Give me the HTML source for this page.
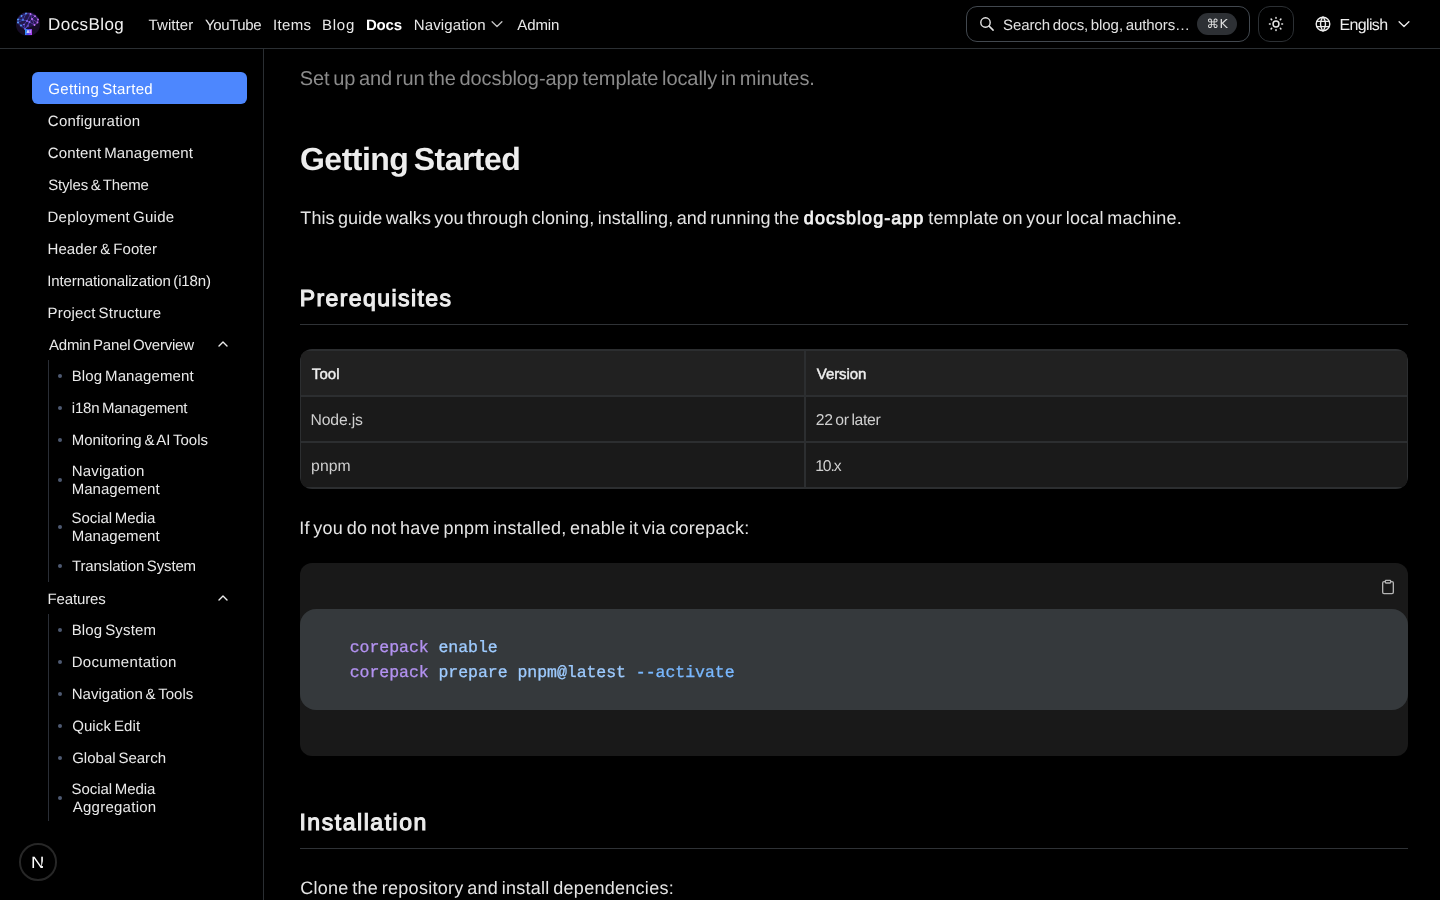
<!DOCTYPE html>
<html lang="en">
<head>
<meta charset="utf-8">
<title>Getting Started – DocsBlog</title>
<style>
*{box-sizing:border-box;margin:0;padding:0}
html,body{width:1440px;height:900px;overflow:hidden;background:#000;color:#e5e5e5;font-family:"Liberation Sans",sans-serif}
#root{position:absolute;left:0;top:0;width:1440px;height:900px;will-change:transform}
.abs{position:absolute}
.t{position:absolute;white-space:nowrap;word-spacing:-0.09em;text-rendering:geometricPrecision}
#hdr-line{left:0;top:48px;width:1440px;height:1px;background:#2b2f33}
#sb-line{left:263px;top:49px;width:1px;height:851px;background:#2a2e32}
#active{left:32px;top:72px;width:215px;height:32px;border-radius:6px;background:#4d87fe}
#searchbox{left:966px;top:6px;width:284px;height:36px;border:1px solid #42484f;border-radius:11px}
#kbdpill{left:1197px;top:13px;width:40px;height:22px;border-radius:11px;background:#2d3034}
#themebtn{left:1258px;top:6px;width:36px;height:36px;border:1px solid #2c3034;border-radius:12px}
.vline{width:1px;background:#2a2e36}
.dot{width:4px;height:4px;border-radius:50%;background:#4e5a72}
.hr{height:1px;background:#2f3236;left:300px;width:1108px}
#tbl{left:300px;top:349px;width:1108px;height:140px;border-radius:12px;background:#2c2e30;overflow:hidden}
#tbl div{position:absolute}
#codeouter{left:300px;top:563px;width:1108px;height:193px;border-radius:12px;background:#191919}
#codeinner{left:300px;top:609px;width:1108px;height:101px;border-radius:16px;background:#35393c}
svg{position:absolute;overflow:visible}
</style>
</head>
<body>
<div id="root">
<div class="abs" id="hdr-line"></div>
<div class="abs" id="sb-line"></div>
<div class="abs" id="active"></div>
<div class="abs" id="searchbox"></div>
<div class="abs" id="kbdpill"></div>
<div class="abs" id="themebtn"></div>
<div class="abs vline" style="left:48px;top:360px;height:222px"></div>
<div class="abs vline" style="left:48px;top:614px;height:207px"></div>
<div class="abs dot" style="left:58px;top:373.90px"></div>
<div class="abs dot" style="left:58px;top:405.90px"></div>
<div class="abs dot" style="left:58px;top:437.90px"></div>
<div class="abs dot" style="left:58px;top:477.80px"></div>
<div class="abs dot" style="left:58px;top:524.75px"></div>
<div class="abs dot" style="left:58px;top:563.80px"></div>
<div class="abs dot" style="left:58px;top:628.00px"></div>
<div class="abs dot" style="left:58px;top:660.00px"></div>
<div class="abs dot" style="left:58px;top:692.00px"></div>
<div class="abs dot" style="left:58px;top:724.00px"></div>
<div class="abs dot" style="left:58px;top:756.00px"></div>
<div class="abs dot" style="left:58px;top:795.90px"></div>
<div class="abs hr" style="top:324px"></div>
<div class="abs hr" style="top:848px"></div>
<div class="abs" id="tbl">
  <div style="left:1px;top:2px;width:503px;height:44px;background:#212121"></div>
  <div style="left:506px;top:2px;width:601px;height:44px;background:#212121"></div>
  <div style="left:1px;top:48px;width:503px;height:44px;background:#1a1a1a"></div>
  <div style="left:506px;top:48px;width:601px;height:44px;background:#1a1a1a"></div>
  <div style="left:1px;top:94px;width:503px;height:44px;background:#1a1a1a"></div>
  <div style="left:506px;top:94px;width:601px;height:44px;background:#1a1a1a"></div>
</div>
<div class="abs" id="codeouter"></div>
<div class="abs" id="codeinner"></div>
<div id="brand" class="t" style="left:48.08px;top:13.00px;font-size:17px;line-height:24px;font-weight:400;color:#f0f0f0;letter-spacing:0.425px;font-family:'Liberation Sans', sans-serif;">DocsBlog</div>
<div id="n1" class="t" style="left:148.53px;top:15.00px;font-size:15px;line-height:21px;font-weight:400;color:#e8e8e8;letter-spacing:0.099px;font-family:'Liberation Sans', sans-serif;">Twitter</div>
<div id="n2" class="t" style="left:205.09px;top:15.00px;font-size:15px;line-height:21px;font-weight:400;color:#e8e8e8;letter-spacing:-0.407px;font-family:'Liberation Sans', sans-serif;">YouTube</div>
<div id="n3" class="t" style="left:273.06px;top:15.00px;font-size:15px;line-height:21px;font-weight:400;color:#e8e8e8;letter-spacing:0.306px;font-family:'Liberation Sans', sans-serif;">Items</div>
<div id="n4" class="t" style="left:321.89px;top:15.00px;font-size:15px;line-height:21px;font-weight:400;color:#e8e8e8;letter-spacing:0.818px;font-family:'Liberation Sans', sans-serif;">Blog</div>
<div id="n5" class="t" style="left:365.96px;top:15.00px;font-size:15px;line-height:21px;font-weight:700;color:#ffffff;letter-spacing:-0.217px;font-family:'Liberation Sans', sans-serif;">Docs</div>
<div id="n6" class="t" style="left:413.82px;top:15.00px;font-size:15px;line-height:21px;font-weight:400;color:#e8e8e8;letter-spacing:0.107px;font-family:'Liberation Sans', sans-serif;">Navigation</div>
<div id="n7" class="t" style="left:517.3px;top:15.00px;font-size:15px;line-height:21px;font-weight:400;color:#e8e8e8;letter-spacing:-0.112px;font-family:'Liberation Sans', sans-serif;">Admin</div>
<div id="search" class="t" style="left:1002.99px;top:15.00px;font-size:15px;line-height:21px;font-weight:400;color:#e2e2e2;letter-spacing:-0.087px;font-family:'Liberation Sans', sans-serif;">Search docs, blog, authors…</div>
<div id="kbd" class="t" style="left:1206.51px;top:15.01px;font-size:12.5px;line-height:18px;font-weight:400;color:#e0e0e0;letter-spacing:-1.12px;font-family:'DejaVu Sans','Liberation Sans',sans-serif;">⌘ K</div>
<div id="lang" class="t" style="left:1339.45px;top:15.00px;font-size:16px;line-height:22px;font-weight:400;color:#eeeeee;letter-spacing:-0.639px;font-family:'Liberation Sans', sans-serif;">English</div>
<div id="s0" class="t" style="left:48.37px;top:79.00px;font-size:15px;line-height:21px;font-weight:400;color:#ffffff;letter-spacing:0.34px;font-family:'Liberation Sans', sans-serif;">Getting Started</div>
<div id="s1" class="t" style="left:47.8px;top:111.00px;font-size:15px;line-height:21px;font-weight:400;color:#e9e9e9;letter-spacing:0.259px;font-family:'Liberation Sans', sans-serif;">Configuration</div>
<div id="s2" class="t" style="left:47.8px;top:143.00px;font-size:15px;line-height:21px;font-weight:400;color:#e9e9e9;letter-spacing:0.131px;font-family:'Liberation Sans', sans-serif;">Content Management</div>
<div id="s3" class="t" style="left:48.15px;top:175.00px;font-size:15px;line-height:21px;font-weight:400;color:#e9e9e9;letter-spacing:-0.167px;font-family:'Liberation Sans', sans-serif;">Styles &amp; Theme</div>
<div id="s4" class="t" style="left:47.51px;top:207.00px;font-size:15px;line-height:21px;font-weight:400;color:#e9e9e9;letter-spacing:0.246px;font-family:'Liberation Sans', sans-serif;">Deployment Guide</div>
<div id="s5" class="t" style="left:47.51px;top:239.00px;font-size:15px;line-height:21px;font-weight:400;color:#e9e9e9;letter-spacing:0.096px;font-family:'Liberation Sans', sans-serif;">Header &amp; Footer</div>
<div id="s6" class="t" style="left:47.3px;top:271.00px;font-size:15px;line-height:21px;font-weight:400;color:#e9e9e9;letter-spacing:-0.131px;font-family:'Liberation Sans', sans-serif;">Internationalization (i18n)</div>
<div id="s7" class="t" style="left:47.51px;top:303.00px;font-size:15px;line-height:21px;font-weight:400;color:#e9e9e9;letter-spacing:0.202px;font-family:'Liberation Sans', sans-serif;">Project Structure</div>
<div id="s8" class="t" style="left:48.97px;top:335.00px;font-size:15px;line-height:21px;font-weight:400;color:#e9e9e9;letter-spacing:-0.206px;font-family:'Liberation Sans', sans-serif;">Admin Panel Overview</div>
<div id="a0" class="t" style="left:71.69px;top:366.01px;font-size:15px;line-height:21px;font-weight:400;color:#e9e9e9;letter-spacing:0.108px;font-family:'Liberation Sans', sans-serif;">Blog Management</div>
<div id="a1" class="t" style="left:71.83px;top:398.01px;font-size:15px;line-height:21px;font-weight:400;color:#e9e9e9;letter-spacing:-0.221px;font-family:'Liberation Sans', sans-serif;">i18n Management</div>
<div id="a2" class="t" style="left:71.69px;top:430.01px;font-size:15px;line-height:21px;font-weight:400;color:#e9e9e9;letter-spacing:-0.014px;font-family:'Liberation Sans', sans-serif;">Monitoring &amp; AI Tools</div>
<div id="a3" class="t" style="left:71.69px;top:461.00px;font-size:15px;line-height:21px;font-weight:400;color:#e9e9e9;letter-spacing:0.188px;font-family:'Liberation Sans', sans-serif;">Navigation</div>
<div id="a4" class="t" style="left:71.69px;top:479.01px;font-size:15px;line-height:21px;font-weight:400;color:#e9e9e9;letter-spacing:0.035px;font-family:'Liberation Sans', sans-serif;">Management</div>
<div id="a5" class="t" style="left:71.5px;top:508.01px;font-size:15px;line-height:21px;font-weight:400;color:#e9e9e9;letter-spacing:-0.057px;font-family:'Liberation Sans', sans-serif;">Social Media</div>
<div id="a6" class="t" style="left:71.69px;top:526.01px;font-size:15px;line-height:21px;font-weight:400;color:#e9e9e9;letter-spacing:0.035px;font-family:'Liberation Sans', sans-serif;">Management</div>
<div id="a7" class="t" style="left:72.01px;top:556.01px;font-size:15px;line-height:21px;font-weight:400;color:#e9e9e9;letter-spacing:-0.139px;font-family:'Liberation Sans', sans-serif;">Translation System</div>
<div id="feat" class="t" style="left:47.51px;top:589.01px;font-size:15px;line-height:21px;font-weight:400;color:#e9e9e9;letter-spacing:-0.123px;font-family:'Liberation Sans', sans-serif;">Features</div>
<div id="f0" class="t" style="left:71.69px;top:620.01px;font-size:15px;line-height:21px;font-weight:400;color:#e9e9e9;letter-spacing:0.137px;font-family:'Liberation Sans', sans-serif;">Blog System</div>
<div id="f1" class="t" style="left:71.69px;top:652.01px;font-size:15px;line-height:21px;font-weight:400;color:#e9e9e9;letter-spacing:0.322px;font-family:'Liberation Sans', sans-serif;">Documentation</div>
<div id="f2" class="t" style="left:71.69px;top:684.01px;font-size:15px;line-height:21px;font-weight:400;color:#e9e9e9;letter-spacing:0.02px;font-family:'Liberation Sans', sans-serif;">Navigation &amp; Tools</div>
<div id="f3" class="t" style="left:72.17px;top:716.01px;font-size:15px;line-height:21px;font-weight:400;color:#e9e9e9;letter-spacing:0.101px;font-family:'Liberation Sans', sans-serif;">Quick Edit</div>
<div id="f4" class="t" style="left:72.16px;top:748.01px;font-size:15px;line-height:21px;font-weight:400;color:#e9e9e9;letter-spacing:0.01px;font-family:'Liberation Sans', sans-serif;">Global Search</div>
<div id="f5" class="t" style="left:71.5px;top:779.01px;font-size:15px;line-height:21px;font-weight:400;color:#e9e9e9;letter-spacing:-0.057px;font-family:'Liberation Sans', sans-serif;">Social Media</div>
<div id="f6" class="t" style="left:72.66px;top:797.01px;font-size:15px;line-height:21px;font-weight:400;color:#e9e9e9;letter-spacing:0.266px;font-family:'Liberation Sans', sans-serif;">Aggregation</div>
<div id="lead" class="t" style="left:299.8px;top:65.01px;font-size:20px;line-height:28px;font-weight:400;color:#8b8b8b;letter-spacing:-0.078px;font-family:'Liberation Sans', sans-serif;">Set up and run the docsblog-app template locally in minutes.</div>
<div id="h1" class="t" style="left:300.03px;top:137.01px;font-size:32px;line-height:45px;font-weight:700;color:#ededed;letter-spacing:-0.534px;font-family:'Liberation Sans', sans-serif;">Getting Started</div>
<div id="p1a" class="t" style="left:300.36px;top:206.01px;font-size:18px;line-height:25px;font-weight:400;color:#e4e4e4;letter-spacing:0.048px;font-family:'Liberation Sans', sans-serif;">This guide walks you through cloning, installing, and running the</div>
<div id="p1b" class="t" style="left:803.87px;top:206.01px;font-size:18px;line-height:25px;font-weight:400;color:#f2f2f2;letter-spacing:1.032px;font-family:'Liberation Sans', sans-serif;-webkit-text-stroke:0.75px #f2f2f2;">docsblog-app</div>
<div id="p1c" class="t" style="left:928.2px;top:206.01px;font-size:18px;line-height:25px;font-weight:400;color:#e4e4e4;letter-spacing:0.194px;font-family:'Liberation Sans', sans-serif;">template on your local machine.</div>
<div id="h2a" class="t" style="left:299.74px;top:282.70px;font-size:23px;line-height:32px;font-weight:400;color:#ededed;letter-spacing:1.419px;font-family:'Liberation Sans', sans-serif;transform:translateY(-0.7px);-webkit-text-stroke:1.1px #ededed;">Prerequisites</div>
<div id="th1" class="t" style="left:311.87px;top:364.01px;font-size:15px;line-height:21px;font-weight:400;color:#efefef;letter-spacing:0.083px;font-family:'Liberation Sans', sans-serif;-webkit-text-stroke:0.45px #efefef;">Tool</div>
<div id="th2" class="t" style="left:816.85px;top:364.01px;font-size:15px;line-height:21px;font-weight:400;color:#efefef;letter-spacing:-0.085px;font-family:'Liberation Sans', sans-serif;-webkit-text-stroke:0.45px #efefef;">Version</div>
<div id="td1" class="t" style="left:310.62px;top:410.01px;font-size:15.75px;line-height:22px;font-weight:400;color:#cfcfcf;letter-spacing:-0.19px;font-family:'Liberation Sans', sans-serif;">Node.js</div>
<div id="td2" class="t" style="left:815.76px;top:410.01px;font-size:15.75px;line-height:22px;font-weight:400;color:#cfcfcf;letter-spacing:-0.302px;font-family:'Liberation Sans', sans-serif;">22 or later</div>
<div id="td3" class="t" style="left:311.11px;top:456.00px;font-size:15.75px;line-height:22px;font-weight:400;color:#cfcfcf;letter-spacing:0.079px;font-family:'Liberation Sans', sans-serif;">pnpm</div>
<div id="td4" class="t" style="left:815.18px;top:456.00px;font-size:15.75px;line-height:22px;font-weight:400;color:#cfcfcf;letter-spacing:-1.129px;font-family:'Liberation Sans', sans-serif;">10.x</div>
<div id="p2" class="t" style="left:299.32px;top:516.01px;font-size:18px;line-height:25px;font-weight:400;color:#e4e4e4;letter-spacing:0.225px;font-family:'Liberation Sans', sans-serif;">If you do not have pnpm installed, enable it via corepack:</div>
<div id="c1" class="t" style="left:349.7px;top:635.01px;font-size:16.5px;line-height:25px;font-weight:400;color:#9ecbff;letter-spacing:-0.035px;font-family:'Liberation Mono', monospace;white-space:pre;word-spacing:0;-webkit-text-stroke:0.3px;"><span style="color:#b392f0">corepack</span> <span style="color:#9ecbff">enable</span></div>
<div id="c2" class="t" style="left:349.7px;top:660.01px;font-size:16.5px;line-height:25px;font-weight:400;color:#9ecbff;letter-spacing:-0.035px;font-family:'Liberation Mono', monospace;white-space:pre;word-spacing:0;-webkit-text-stroke:0.3px;"><span style="color:#b392f0">corepack</span> <span style="color:#9ecbff">prepare pnpm@latest</span> <span style="color:#79b8ff">--activate</span></div>
<div id="nlogo" class="t" style="left:30.9px;top:852.00px;font-size:16.5px;line-height:23px;font-weight:400;color:#ffffff;letter-spacing:0px;font-family:'Liberation Sans', sans-serif;transform:scaleX(1.12);transform-origin:0 0;">N</div>
<div id="h2b" class="t" style="left:299.43px;top:806.70px;font-size:23px;line-height:32px;font-weight:400;color:#ededed;letter-spacing:1.548px;font-family:'Liberation Sans', sans-serif;transform:translateY(-0.7px);-webkit-text-stroke:1.1px #ededed;">Installation</div>
<div id="p3" class="t" style="left:300.19px;top:876.01px;font-size:18px;line-height:25px;font-weight:400;color:#e4e4e4;letter-spacing:0.275px;font-family:'Liberation Sans', sans-serif;">Clone the repository and install dependencies:</div>
<!-- logo -->
<div class="abs" id="logo" style="left:16.4px;top:12.4px;width:23.2px;height:23.2px;border-radius:50%;overflow:hidden;background:#160c26">
<svg style="left:-0.4px;top:-0.4px" width="24" height="24" viewBox="0 0 24 24">
  <path d="M1.2 9.5C1 4.5 5 0.8 10.5 0.6C16 0.3 22.5 3 22.8 8.5C23 11.5 20 13.5 17 14L9 17.2C5 16.5 1.5 13.5 1.2 9.5Z" fill="#5a4be0" opacity="0.2"/>
  <g stroke-width="0.55" fill="none" opacity="0.95" stroke-linecap="round">
    <line x1="2.0" y1="7.5" x2="5.5" y2="4.0" stroke="#3c66f1"/>
    <line x1="5.5" y1="4.0" x2="10.0" y2="1.5" stroke="#555cf0"/>
    <line x1="10.0" y1="1.5" x2="14.5" y2="2.0" stroke="#7152ee"/>
    <line x1="14.5" y1="2.0" x2="19.0" y2="4.2" stroke="#8d52ea"/>
    <line x1="19.0" y1="4.2" x2="22.0" y2="7.5" stroke="#a552e6"/>
    <line x1="22.0" y1="7.5" x2="21.5" y2="10.5" stroke="#ad52e5"/>
    <line x1="21.5" y1="10.5" x2="18.5" y2="13.0" stroke="#a252e7"/>
    <line x1="18.5" y1="13.0" x2="13.5" y2="10.0" stroke="#8852ea"/>
    <line x1="13.5" y1="10.0" x2="9.0" y2="17.0" stroke="#6a54ee"/>
    <line x1="9.0" y1="17.0" x2="5.0" y2="13.5" stroke="#505ef0"/>
    <line x1="5.0" y1="13.5" x2="2.0" y2="10.5" stroke="#3a66f1"/>
    <line x1="2.0" y1="10.5" x2="2.0" y2="7.5" stroke="#316af2"/>
    <line x1="5.5" y1="4.0" x2="7.0" y2="8.0" stroke="#4b60f0"/>
    <line x1="7.0" y1="8.0" x2="2.0" y2="10.5" stroke="#4164f1"/>
    <line x1="7.0" y1="8.0" x2="10.0" y2="1.5" stroke="#595aef"/>
    <line x1="7.0" y1="8.0" x2="11.0" y2="9.0" stroke="#5c59ef"/>
    <line x1="11.0" y1="9.0" x2="14.5" y2="2.0" stroke="#7452ed"/>
    <line x1="11.0" y1="9.0" x2="13.5" y2="10.0" stroke="#7152ee"/>
    <line x1="13.5" y1="10.0" x2="16.0" y2="7.0" stroke="#8052ec"/>
    <line x1="16.0" y1="7.0" x2="19.0" y2="4.2" stroke="#9252e9"/>
    <line x1="16.0" y1="7.0" x2="21.5" y2="10.5" stroke="#9a52e8"/>
    <line x1="16.0" y1="7.0" x2="14.5" y2="2.0" stroke="#8452eb"/>
    <line x1="11.0" y1="9.0" x2="8.0" y2="12.5" stroke="#6058ef"/>
    <line x1="8.0" y1="12.5" x2="5.0" y2="13.5" stroke="#4d5ff0"/>
    <line x1="8.0" y1="12.5" x2="9.0" y2="17.0" stroke="#595aef"/>
    <line x1="13.5" y1="10.0" x2="12.0" y2="14.0" stroke="#7452ed"/>
    <line x1="12.0" y1="14.0" x2="9.0" y2="17.0" stroke="#6656ef"/>
    <line x1="18.5" y1="13.0" x2="16.0" y2="7.0" stroke="#9052e9"/>
    <line x1="2.0" y1="7.5" x2="7.0" y2="8.0" stroke="#4164f1"/>
  </g>
  <g fill="#5aa0ff">
    <circle cx="2" cy="7.5" r="0.9"/><circle cx="5.5" cy="4" r="0.9"/><circle cx="2" cy="10.5" r="0.9"/><circle cx="5" cy="13.5" r="0.9"/><circle cx="7" cy="8" r="0.8"/><circle cx="10" cy="1.5" r="0.9"/>
  </g>
  <g fill="#8f6cf5">
    <circle cx="11" cy="9" r="0.9"/><circle cx="8" cy="12.5" r="0.8"/><circle cx="9" cy="17" r="0.8"/><circle cx="12" cy="14" r="0.7"/><circle cx="13.5" cy="10" r="0.9"/>
  </g>
  <g fill="#c070f0">
    <circle cx="14.5" cy="2" r="0.9"/><circle cx="19" cy="4.2" r="0.9"/><circle cx="22" cy="7.5" r="0.9"/><circle cx="21.5" cy="10.5" r="0.9"/><circle cx="18.5" cy="13" r="0.9"/><circle cx="16" cy="7" r="0.9"/>
  </g>
</svg>
<div class="abs" style="left:8.9px;top:16.4px;width:6.6px;height:6px;border-radius:0.6px;background:linear-gradient(100deg,#22aef5 0%,#4a45f2 45%,#c244ee 100%);color:#f1efff;font-weight:700;font-size:4.2px;line-height:6px;text-align:center;overflow:hidden">AI</div>
</div>
<svg id="ico" style="left:0;top:0" width="1440" height="900" viewBox="0 0 1440 900" fill="none" stroke-linecap="round" stroke-linejoin="round">
  <!-- nav chevron -->
  <path d="M492.1 21.75L497 26.5L501.9 21.75" stroke="#c4c4c4" stroke-width="1.3"/>
  <!-- search -->
  <circle cx="985.5" cy="22.5" r="4.7" stroke="#e4e4e4" stroke-width="1.4"/>
  <path d="M989.1 26.1L993.1 30.1" stroke="#e4e4e4" stroke-width="1.5"/>
  <!-- sun -->
  <g stroke="#e6e6e6" stroke-width="1.5">
    <circle cx="1276" cy="24" r="2.95"/>
    <path d="M1276 17.45v.75M1276 29.8v.75M1269.45 24h.75M1281.8 24h.75M1280.35 19.65l.5-.5M1271.15 28.85l.5-.5M1271.15 19.15l.5.5M1280.35 28.35l.5.5"/>
  </g>
  <!-- globe -->
  <g stroke="#ececec" stroke-width="1.4">
    <circle cx="1323" cy="24" r="6.8"/>
    <path d="M1316.9 21.4h12.2M1316.9 26.6h12.2"/>
    <path d="M1322.6 17.2a13 13 0 0 0 0 13.6M1323.4 17.2a13 13 0 0 1 0 13.6"/>
  </g>
  <!-- lang chevron -->
  <path d="M1399.1 21.75L1404 26.5L1408.9 21.75" stroke="#ececec" stroke-width="1.35"/>
  <!-- sidebar chevrons -->
  <path d="M219 345.9L223 341.95L227 345.9" stroke="#ececec" stroke-width="1.4"/>
  <path d="M219 599.9L223 595.95L227 599.9" stroke="#ececec" stroke-width="1.4"/>
</svg>
<!-- clipboard -->
<svg style="left:1380px;top:579px" width="16" height="16" viewBox="0 0 24 24" fill="none" stroke="#b4b4b4" stroke-width="2" stroke-linecap="round" stroke-linejoin="round"><rect width="8" height="4" x="8" y="2" rx="1" ry="1"/><path d="M16 4h2a2 2 0 0 1 2 2v14a2 2 0 0 1-2 2H6a2 2 0 0 1-2-2V6a2 2 0 0 1 2-2h2"/></svg>
<!-- next badge -->
<div class="abs" id="nbadge" style="left:19.4px;top:843.2px;width:37.6px;height:37.6px;border-radius:50%;border:2px solid #272727"></div>
<div class="abs" style="left:42px;top:860.5px;width:3.5px;height:5.5px;background:linear-gradient(to bottom,rgba(0,0,0,0),#000 80%)"></div>

</div>
</body>
</html>
